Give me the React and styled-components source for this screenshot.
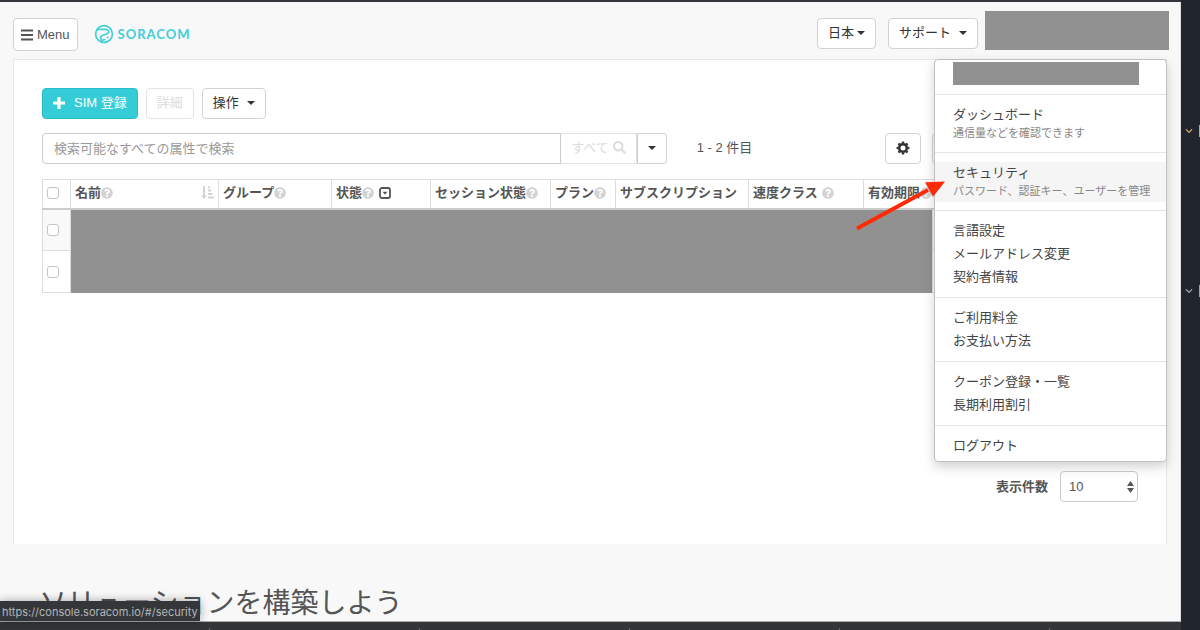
import { useState } from 'react';
import styled, { createGlobalStyle } from 'styled-components';
import {
  FaPlus,
  FaSearch,
  FaQuestionCircle,
  FaRegCaretSquareDown,
  FaChevronDown,
} from 'react-icons/fa';

const columns = [
  { label: '名前', width: 148, help: true, sort: true },
  { label: 'グループ', width: 113, help: true },
  { label: '状態', width: 99, help: true, filter: true },
  { label: 'セッション状態', width: 120, help: true },
  { label: 'プラン', width: 65, help: true },
  { label: 'サブスクリプション', width: 133 },
  { label: '速度クラス', width: 115, help: true, spaced: true },
  { label: '有効期限', width: 69, help: true, span: 2 },
];

const menuGroups = [
  [{ label: 'ダッシュボード', note: '通信量などを確認できます' }],
  [
    {
      label: 'セキュリティ',
      note: 'パスワード、認証キー、ユーザーを管理',
      href: '#/security',
      active: true,
    },
  ],
  [{ label: '言語設定' }, { label: 'メールアドレス変更' }, { label: '契約者情報' }],
  [{ label: 'ご利用料金' }, { label: 'お支払い方法' }],
  [{ label: 'クーポン登録・一覧' }, { label: '長期利用割引' }],
  [{ label: 'ログアウト' }],
];

const BarsIcon = () => (
  <svg width="12" height="12" viewBox="0 0 12 12" aria-hidden="true">
    <path d="M0 1.5h12M0 6h12M0 10.5h12" stroke="currentColor" strokeWidth="1.9" />
  </svg>
);

const GearIcon = () => (
  <svg width="14" height="14" viewBox="-7 -7 14 14" aria-hidden="true">
    <circle r="3.7" fill="none" stroke="currentColor" strokeWidth="2.4" />
    {[0, 45, 90, 135, 180, 225, 270, 315].map(deg => (
      <path
        key={deg}
        d="M-1.5 -4.4L-1 -6.4H1L1.5 -4.4Z"
        fill="currentColor"
        transform={`rotate(${deg})`}
      />
    ))}
  </svg>
);

const PlusIcon = () => (
  <svg width="12" height="12" viewBox="0 0 12 12" aria-hidden="true">
    <path d="M6 0v12M0 6h12" stroke="currentColor" strokeWidth="3.2" />
  </svg>
);

const SortIcon = () => (
  <svg width="13" height="13" viewBox="0 0 13 13" aria-hidden="true">
    <path d="M2 0h2v9.5h2L3 13 0 9.5h2z" fill="currentColor" />
    <path
      d="M7 1.2h2M7 4.6h3M7 8h4.5M7 11.6h6"
      stroke="currentColor"
      strokeWidth="2"
    />
  </svg>
);

const FilterIcon = () => (
  <svg width="12" height="12" viewBox="0 0 12 12" aria-hidden="true">
    <rect
      x="1"
      y="1"
      width="10"
      height="10"
      rx="2"
      fill="none"
      stroke="currentColor"
      strokeWidth="1.8"
    />
    <path d="M3.600 4.700h4.800L6 7.700z" fill="currentColor" />
  </svg>
);

const LogoMark = () => (
  <svg width="20" height="20" viewBox="0 0 20 20" aria-hidden="true">
    <g fill="none" stroke="currentColor" strokeWidth="1.6" strokeLinejoin="round">
      <circle cx="10" cy="10" r="8.4" />
      <path d="M2.800 6.200C5 4.600 7.500 5.600 10 5.400c2.300-.2 5 .4 4.800 2.500-.2 2-2.600 2-4.600 2.900-1.800.8-3.900.9-3.800 2.100.1 1.400 1.700 2 1.200 4.600" />
      <path d="M8 16.600l3.400-1.300" />
    </g>
    <circle cx="13.600" cy="13.500" r=".9" fill="currentColor" />
  </svg>
);

const Arrow = () => (
  <Pointer width="90" height="52" viewBox="0 0 90 52" aria-hidden="true">
    <path d="M2 48.500L73 10" stroke="#ff2a06" strokeWidth="4" />
    <path d="M90 1.500L70 2.300l8 14.400z" fill="#ff2a06" />
  </Pointer>
);

const App = () => {
  const [query, setQuery] = useState('');
  const [pageSize, setPageSize] = useState('10');

  return (
    <Screen>
      <GlobalStyle />
      <Browser>
        <Page>
          <Header>
            <Nav>
              <MenuButton type="button">
                <BarsIcon />
                Menu
              </MenuButton>
              <Brand href="#/">
                <LogoMark />
                SORACOM
              </Brand>
            </Nav>
            <Nav>
              <Button type="button">
                日本
                <Caret />
              </Button>
              <Button type="button" $gap={8}>
                サポート
                <Caret />
              </Button>
            </Nav>
            <Account>
              <AccountButton type="button" aria-label="アカウント" />
              <Menu>
                <MenuHead>
                  <Redacted />
                </MenuHead>
                {menuGroups.map(group => (
                  <MenuGroup key={group[0].label}>
                    {group.map(item => (
                      <MenuItem
                        key={item.label}
                        href={item.href || '#/'}
                        $active={item.active}
                      >
                        {item.label}
                        {item.note && <Note>{item.note}</Note>}
                      </MenuItem>
                    ))}
                  </MenuGroup>
                ))}
                <Arrow />
              </Menu>
            </Account>
          </Header>

          <Card>
            <Toolbar>
              <PrimaryButton type="button">
                <PlusIcon />
                SIM 登録
              </PrimaryButton>
              <Button type="button" disabled>
                詳細
              </Button>
              <Button type="button" $gap={8}>
                操作
                <Caret />
              </Button>
            </Toolbar>

            <SearchRow>
              <SearchGroup>
                <SearchInput
                  value={query}
                  onChange={e => setQuery(e.target.value)}
                  placeholder="検索可能なすべての属性で検索"
                  aria-label="検索"
                />
                <SearchButton type="button" disabled>
                  すべて
                  <FaSearch size={13} />
                </SearchButton>
                <SearchToggle type="button" aria-label="検索条件">
                  <Caret />
                </SearchToggle>
              </SearchGroup>
              <Count>1 - 2 件目</Count>
              <GearButton type="button" aria-label="設定">
                <GearIcon />
              </GearButton>
              <PagerButton type="button" aria-label="ページ移動" />
            </SearchRow>

            <TableArea>
              <Table>
                <colgroup>
                  <Col $width={28} />
                  {columns.map(col => (
                    <Col key={col.label} $width={col.width} />
                  ))}
                  <col />
                </colgroup>
                <thead>
                  <tr>
                    <Th>
                      <Checkbox type="checkbox" aria-label="すべて選択" />
                    </Th>
                    {columns.map(col => (
                      <Th key={col.label} colSpan={col.span || 1}>
                        <ThInner>
                          {col.label}
                          {col.help && (
                            <Help $spaced={col.spaced}>
                              <FaQuestionCircle size={12} />
                            </Help>
                          )}
                          {col.filter && (
                            <Filter>
                              <FilterIcon />
                            </Filter>
                          )}
                          {col.sort && (
                            <Sort>
                              <SortIcon />
                            </Sort>
                          )}
                        </ThInner>
                      </Th>
                    ))}
                  </tr>
                </thead>
                <tbody>
                  <Row $shaded>
                    <Td>
                      <Checkbox type="checkbox" aria-label="1行目を選択" />
                    </Td>
                    <MaskedTd colSpan={8} rowSpan={2} />
                    <Td />
                  </Row>
                  <Row>
                    <Td>
                      <Checkbox type="checkbox" aria-label="2行目を選択" />
                    </Td>
                    <Td />
                  </Row>
                </tbody>
              </Table>
            </TableArea>

            <CardFooter>
              <label htmlFor="page-size">表示件数</label>
              <SelectBox>
                <Select
                  id="page-size"
                  value={pageSize}
                  onChange={e => setPageSize(e.target.value)}
                >
                  <option>10</option>
                  <option>50</option>
                  <option>100</option>
                </Select>
                <SelectArrows width="7" height="12" viewBox="0 0 7 12">
                  <path d="M3.500 0L7 5H0zM3.500 12L0 7h7z" fill="currentColor" />
                </SelectArrows>
              </SelectBox>
            </CardFooter>
          </Card>

          <Heading>ソリューションを構築しよう</Heading>
          <StatusBubble>https://console.soracom.io/#/security</StatusBubble>
        </Page>
        <BottomBar>
          {[1, 2, 3, 4, 5].map(n => (
            <Tick key={n} />
          ))}
        </BottomBar>
      </Browser>
      <Side>
        <SideRow $color="#c9a26d">
          <FaChevronDown size={8} />
        </SideRow>
        <SideRow $color="#9aa0ac">
          <FaChevronDown size={8} />
        </SideRow>
      </Side>
    </Screen>
  );
};

const GlobalStyle = createGlobalStyle`
  * {
    box-sizing: border-box;
  }
  body {
    margin: 0;
    overflow: hidden;
    color: #555;
    font-family: "Liberation Sans", "Noto Sans CJK JP", sans-serif;
    font-size: 13px;
    line-height: 18px;
  }
  button, input, select {
    font: inherit;
    color: inherit;
  }
  a {
    color: inherit;
    text-decoration: none;
  }
`;

const Screen = styled.div`
  display: grid;
  grid-template-columns: 1fr 19px;
  min-height: 100vh;
`;

const Browser = styled.div`
  display: flex;
  flex-direction: column;
  min-width: 0;
  border-top: 2px solid #33363a;
`;

const Page = styled.main`
  position: relative;
  flex: 1;
  background: #f8f8f8;
  border-right: 1px solid #ddd;
  border-bottom: 1px solid #aaa;
`;

const Header = styled.header`
  display: flex;
  align-items: flex-start;
  gap: 7px;
  height: 57px;
  padding: 9px 11px 0 13px;
`;

const Nav = styled.nav`
  display: flex;
  align-items: center;
  gap: 12px;
  padding-top: 7px;

  &:first-child {
    flex: 1;
    gap: 16px;
  }
`;

const Button = styled.button`
  display: inline-flex;
  align-items: center;
  justify-content: center;
  gap: ${({ $gap }) => $gap || 3}px;
  height: 31px;
  padding: 0 10px 2px;
  background: white;
  border: 1px solid #d2d2d2;
  border-radius: 4px;
  color: #333;
  white-space: nowrap;

  &:disabled {
    color: #ddd;
    border-color: #e2e2e2;
  }
`;

const MenuButton = styled(Button)`
  height: 33px;
  padding: 0 7px;
  gap: 4px;
  color: #555;
`;

const PrimaryButton = styled(Button)`
  gap: 9px;
  background: #34cdd7;
  border-color: #2bbdc7;
  color: white;
`;

const Caret = styled.span`
  border-top: 4px solid #333;
  border-left: 4px solid transparent;
  border-right: 4px solid transparent;
`;

const Brand = styled.a`
  display: flex;
  align-items: center;
  gap: 4px;
  padding-bottom: 2px;
  color: #3fced8;
  font-family: Lato, "Open Sans", sans-serif;
  font-weight: 700;
  letter-spacing: 1px;
`;

const Account = styled.div`
  position: relative;
`;

const AccountButton = styled.button`
  display: block;
  width: 184px;
  height: 39px;
  border: 0;
  background: #919191;
`;

const Menu = styled.div`
  position: absolute;
  z-index: 2;
  top: 48px;
  right: 2px;
  width: 233px;
  padding-bottom: 3px;
  background: white;
  border: 1px solid #c0c0c0;
  border-radius: 4px;
  box-shadow: 0 5px 12px rgba(0, 0, 0, 0.18);
`;

const MenuHead = styled.div`
  padding: 2px 27px 9px 18px;
`;

const Redacted = styled.div`
  height: 23px;
  background: #919191;
`;

const MenuGroup = styled.div`
  padding: 9px 0 8px;
  border-top: 1px solid #e5e5e5;

  &:nth-last-child(2) {
    padding-bottom: 0;
  }
`;

const MenuItem = styled.a`
  display: block;
  padding: 2px 18px 4px;
  line-height: 17px;
  color: #444;
  white-space: nowrap;
  background: ${({ $active }) => ($active ? '#f5f5f5' : 'transparent')};
`;

const Note = styled.small`
  display: block;
  padding-top: 3px;
  font-size: 11px;
  line-height: 14px;
  color: #888;
`;

const Pointer = styled.svg`
  position: absolute;
  top: 120px;
  left: -80px;
`;

const Card = styled.section`
  margin: 0 13px;
  padding: 28px 28px 42px;
  background: white;
  border: 1px solid #e7e7e7;
  border-bottom: 0;
`;

const Toolbar = styled.div`
  display: flex;
  gap: 8px;
`;

const SearchRow = styled.div`
  display: flex;
  align-items: center;
  margin-top: 14px;
`;

const SearchGroup = styled.div`
  display: flex;
  flex: 0 0 57%;
`;

const SearchInput = styled.input`
  flex: 1;
  min-width: 0;
  height: 31px;
  padding: 0 11px 1px;
  border: 1px solid #ccc;
  border-radius: 4px 0 0 4px;

  &::placeholder {
    color: #999;
    opacity: 1;
  }
`;

const SearchButton = styled(Button)`
  gap: 4px;
  border-left: 0;
  border-radius: 0;
`;

const SearchToggle = styled(Button)`
  border-left-color: #ccc;
  border-radius: 0 4px 4px 0;
`;

const Count = styled.span`
  margin: 0 auto 0 30px;
  padding-bottom: 2px;
`;

const GearButton = styled(Button)`
  margin-right: 11px;
`;

const PagerButton = styled(Button)`
  width: 206px;
`;

const TableArea = styled.div`
  min-height: 307px;
  padding-top: 15px;
`;

const Table = styled.table`
  width: 100%;
  table-layout: fixed;
  border-collapse: collapse;
`;

const Col = styled.col`
  width: ${({ $width }) => $width}px;
`;

const Th = styled.th`
  height: 29px;
  padding: 0 4px 2px;
  border: 1px solid #ddd;
  border-bottom: 2px solid #ccc;
  text-align: left;
`;

const ThInner = styled.div`
  display: flex;
  align-items: center;
  white-space: nowrap;
`;

const Help = styled.span`
  display: flex;
  margin-left: ${({ $spaced }) => ($spaced ? 4 : 0)}px;
  color: #d3d3d3;
`;

const Filter = styled.span`
  display: flex;
  margin-left: 5px;
`;

const Sort = styled.span`
  display: flex;
  margin-left: auto;
  color: #d3d3d3;
`;

const Row = styled.tr`
  height: 42px;
  background: ${({ $shaded }) => ($shaded ? '#f9f9f9' : 'white')};
`;

const Td = styled.td`
  padding: 0 4px;
  border: 1px solid #ddd;
`;

const MaskedTd = styled.td`
  background: #919191;
`;

const Checkbox = styled.input`
  appearance: none;
  display: block;
  width: 12px;
  height: 12px;
  margin: 0;
  background: white;
  border: 1px solid #c4c4c4;
  border-radius: 3px;
`;

const CardFooter = styled.div`
  display: flex;
  align-items: center;
  justify-content: flex-end;
  gap: 12px;
  font-weight: 700;
`;

const SelectBox = styled.div`
  position: relative;
  font-weight: 400;
`;

const Select = styled.select`
  appearance: none;
  display: block;
  width: 78px;
  height: 31px;
  padding: 0 8px;
  background: white;
  border: 1px solid #ccc;
  border-radius: 4px;
`;

const SelectArrows = styled.svg`
  position: absolute;
  top: 10px;
  right: 4px;
  pointer-events: none;
`;

const Heading = styled.h2`
  margin: 43px 27px 0 39px;
  font-size: 28px;
  font-weight: 400;
  line-height: 34px;
`;

const StatusBubble = styled.div`
  position: absolute;
  left: 0;
  bottom: 0;
  padding: 2px 2px 0;
  background: #34373a;
  color: #b4b6b8;
  font-family: Inter, sans-serif;
  font-size: 11px;
  line-height: 18px;
  box-shadow: 0 0 10px rgba(0, 0, 0, 0.35);
`;

const BottomBar = styled.footer`
  display: flex;
  align-items: flex-end;
  height: 8px;
  background: #323639;
`;

const Tick = styled.span`
  width: 210px;
  height: 2px;
  border-right: 1px solid #62666a;
`;

const Side = styled.aside`
  display: flex;
  flex-direction: column;
  gap: 148px;
  padding-top: 125px;
  background: #21252d;
`;

const SideRow = styled.div`
  display: flex;
  align-items: center;
  height: 12px;
  padding-left: 4px;
  color: ${({ $color }) => $color};
  border-right: 1px solid ${({ $color }) => $color};
`;

export default App;
